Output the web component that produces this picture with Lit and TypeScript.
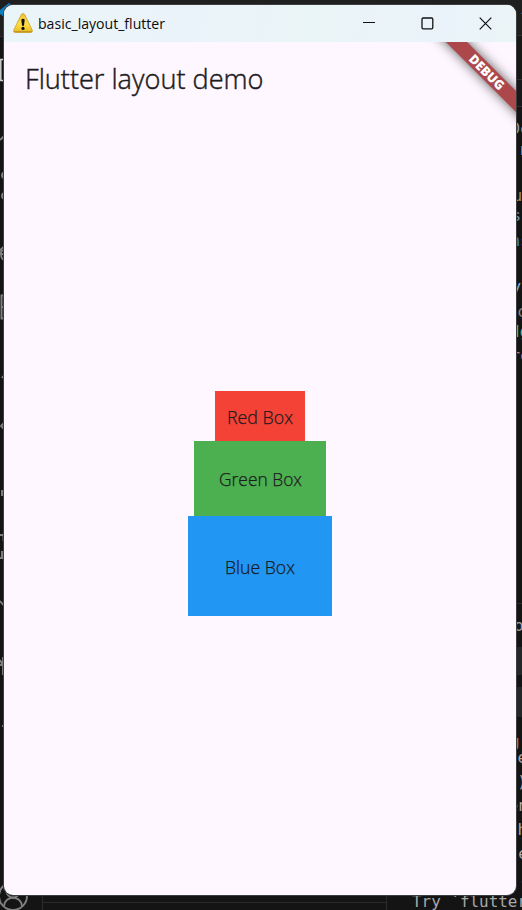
import { LitElement, html, css, svg } from "lit";
import { customElement } from "lit/decorators.js";

interface Fragment {
  x: number;
  y: number;
  text: string;
  fill: string;
}

const codeFragments: Fragment[] = [
  { x: 519, y: 18, text: "‹", fill: "#8fb4cc" },
  { x: 510.5, y: 134, text: "De", fill: "#8f9aa8" },
  { x: 520, y: 155, text: "n", fill: "#9cc4ee" },
  { x: 512.5, y: 201, text: "u", fill: "#a58c5c" },
  { x: 511.5, y: 221, text: "s", fill: "#5d9ab4" },
  { x: 510.5, y: 246, text: "ns", fill: "#3c86c4" },
  { x: 511.5, y: 292, text: "yo", fill: "#76b8e8" },
  { x: 517, y: 317, text: "c", fill: "#858585" },
  { x: 510, y: 337, text: "dg", fill: "#35c58a" },
  { x: 510.5, y: 361, text: "re", fill: "#c070a8" },
  { x: 514, y: 631, text: "o", fill: "#9da4a8" },
  { x: 510, y: 747, text: "g", fill: "#a87b38" },
  { x: 517.5, y: 763, text: "e", fill: "#a8a8a8" },
  { x: 507.5, y: 787, text: "e)", fill: "#a8a8a8" },
  { x: 508.5, y: 811, text: "en", fill: "#a8a8a8" },
  { x: 517.5, y: 835, text: "h", fill: "#a8a8a8" },
  { x: 508.5, y: 859, text: "le", fill: "#a8a8a8" },
  { x: 508.5, y: 883, text: "s.", fill: "#a8a8a8" },
];

@customElement("editor-backdrop")
class EditorBackdrop extends LitElement {
  static styles = css`
    :host { display: block; width: 522px; height: 910px; }
    svg { display: block; }
    .code { font: 16px "DejaVu Sans Mono", monospace; }
    .terminal { font: 16px "DejaVu Sans Mono", monospace; fill: #a8a8a8; }
    .glyph { fill: none; stroke: #808080; stroke-width: 1.9; }
  `;

  render() {
    return html`<svg width="522" height="910" viewBox="0 0 522 910">
      <rect width="522" height="910" fill="#141414" />
      <rect width="522" height="36" fill="#1f1f1f" />
      <rect x="516" y="36" width="6" height="71" fill="#181818" />
      <path d="M0 36.500H5M516 35.500H522M516 79.500H522M516 106.500H522" stroke="#303030" />
      <rect x="516" y="647" width="6" height="28" fill="#242627" />
      <rect x="516" y="687" width="6" height="30" fill="#242627" />
      <path d="M516 603.500H522M42.500 890V910M43 902.500H386M386.500 890V910" stroke="#2b2b2b" fill="none" />
      <path d="M0 10L9 3L14 7L4 17L0 14Z" fill="#0c7fc0" />
      <path d="M7 59.500H.8V80.500H7" stroke="#d0d0d0" stroke-width="1.500" fill="none" />
      <g class="glyph">
        <path d="M0 140L6 134" />
        <circle cx="5" cy="175.500" r="3" />
        <circle cx="5" cy="196" r="3" />
        <path d="M6 247Q1 246 1 253Q1 261 6 260M0 254H6M0 249L3 251" />
        <path d="M6 295.500H1.500V318.500H6M2 307H6" />
        <path d="M2 378L5 374M5 422L1 426L5 430M2 496V491H6" />
        <path d="M0 535H3.500V541M0 558H2V551M5 558H2" />
        <path d="M0 601L6 608M0 665H6M3 657V675M0 660L6 671" />
        <path d="M2 726H6" />
        <circle cx="13" cy="896" r="14" />
        <circle cx="13" cy="891" r="6.500" />
        <path d="M4 906C5 895 21 895 22 906" />
      </g>
      ${codeFragments.map(
        (f) => svg`<text class="code" x=${f.x} y=${f.y} fill=${f.fill}>${f.text}</text>`
      )}
      <text class="terminal" x="412" y="907" textLength="115" lengthAdjust="spacingAndGlyphs">Try \`flutter</text>
    </svg>`;
  }
}

@customElement("fitted-label")
class FittedLabel extends LitElement {
  static properties = {
    text: {},
    width: { type: Number },
    size: { type: Number },
  };
  declare text: string;
  declare width: number;
  declare size: number;

  static styles = css`
    :host { display: block; flex: none; }
    svg { display: block; overflow: visible; }
    text {
      font-family: "Open Sans", "Noto Sans", sans-serif;
      font-weight: inherit;
      fill: currentColor;
      stroke: currentColor;
      stroke-width: var(--label-stroke, 0);
    }
  `;

  render() {
    const height = Math.round(this.size * 1.4);
    return html`<svg width=${this.width} height=${height}>
      <text x="0" y=${this.size * 1.05} font-size=${this.size} textLength=${this.width}
        lengthAdjust="spacingAndGlyphs">${this.text}</text>
    </svg>`;
  }
}

@customElement("title-bar")
class TitleBar extends LitElement {
  static styles = css`
    :host {
      display: flex;
      align-items: center;
      height: 37px;
      box-sizing: border-box;
      padding-left: 9px;
      background: linear-gradient(100deg, #eaf5f8 0%, #eaf3fa 35%, #eaf5f7 60%, #eaf3fa 85%, #eaf5f7 100%);
      color: #0c0c0c;
    }
    .warning { flex: none; margin: -2px 5px 0 0; }
    .controls { display: flex; margin-left: auto; margin-right: 1px; }
    .control { width: 58.5px; height: 37px; display: grid; place-items: center; }
    .control svg { fill: none; stroke: #111; stroke-width: 1.2; }
    .control .line { stroke-width: 1; }
  `;

  render() {
    return html`
      <svg class="warning" width="20" height="20" viewBox="0 0 20 20">
        <defs>
          <linearGradient id="yellow" x1="0" y1="0" x2="0" y2="1">
            <stop offset="0" stop-color="#f0c030" />
            <stop offset=".55" stop-color="#ffdf45" />
            <stop offset="1" stop-color="#e9b91e" />
          </linearGradient>
        </defs>
        <path d="M8.300 1.600Q10 -.7 11.700 1.600L19.200 17Q20 19.300 17.800 19.500H2.200Q0 19.300 .8 17Z" fill="url(#yellow)" stroke="#c99f27" stroke-width=".8" />
        <path d="M1 18.700H19" stroke="#b9902c" stroke-width="1" />
        <path d="M8.300 6.400Q10 5.300 11.700 6.400L11 12.800H9Z" fill="#111" />
        <circle cx="10" cy="15.400" r="1.600" fill="#111" />
      </svg>
      <fitted-label text="basic_layout_flutter" width="127" size="14.500"></fitted-label>
      <div class="controls">
        <div class="control"><svg width="12" height="13"><path class="line" d="M0 5.500H12" /></svg></div>
        <div class="control"><svg width="13" height="13"><rect x="1" y="1" width="10.800" height="10.800" rx="1.200" stroke-width="1.300" /></svg></div>
        <div class="control"><svg width="13" height="13"><path d="M.7 .7L12.300 12.300M12.300 .7L.7 12.300" /></svg></div>
      </div>
    `;
  }
}

@customElement("app-root")
class AppRoot extends LitElement {
  static styles = css`
    :host { display: grid; width: 522px; height: 910px; overflow: hidden; }
    editor-backdrop, .window { grid-area: 1 / 1; }
    .window {
      z-index: 1;
      margin: 5px 6px 15px 4px;
      display: flex;
      flex-direction: column;
      border-radius: 9px;
      overflow: hidden;
      background: #fef7ff;
    }
    .frame {
      grid-area: 1 / 1;
      margin: 4px 5px 14px 3px;
      border-radius: 10px;
      background: #3b3d3e;
    }
    .content {
      position: relative;
      flex: 1;
      overflow: hidden;
      display: flex;
      flex-direction: column;
      color: #1d1b20;
    }
    .app-bar {
      height: 70px;
      display: flex;
      align-items: center;
      padding: 4px 0 0 20.500px;
      box-sizing: border-box;
      font-weight: 300;
      --label-stroke: 0.45px;
    }
    .body { flex: 1; display: flex; flex-direction: column; align-items: center; justify-content: center; }
    .box {
      display: grid;
      place-items: center;
      font-weight: 300;
      padding-top: 4px;
      box-sizing: border-box;
      --label-stroke: 0.25px;
    }
    .red { width: 90px; height: 50px; background: #f44336; padding-top: 5px; }
    .green { width: 132px; height: 75px; background: #4caf50; }
    .blue { width: 144px; height: 100px; background: #2196f3; }
    .banner {
      position: absolute;
      right: -70px;
      top: 22.400px;
      width: 200px;
      height: 15px;
      box-sizing: border-box;
      padding-left: 2px;
      transform: rotate(45deg);
      background: #ac484b;
      box-shadow: 0 0 12px rgba(0, 0, 0, 0.65);
      color: #fff;
      text-align: center;
      font: 900 12.750px/14px "Open Sans", "Noto Sans", sans-serif;
    }
  `;

  render() {
    return html`
      <editor-backdrop></editor-backdrop>
      <div class="frame"></div>
      <main class="window">
        <title-bar></title-bar>
        <section class="content">
          <div class="app-bar">
            <fitted-label text="Flutter layout demo" width="238.500" size="27.500"></fitted-label>
          </div>
          <div class="body">
            <div class="box red"><fitted-label text="Red Box" width="66" size="17.500"></fitted-label></div>
            <div class="box green"><fitted-label text="Green Box" width="83" size="17.500"></fitted-label></div>
            <div class="box blue"><fitted-label text="Blue Box" width="70" size="17.500"></fitted-label></div>
          </div>
          <div class="banner">DEBUG</div>
        </section>
      </main>
    `;
  }
}
